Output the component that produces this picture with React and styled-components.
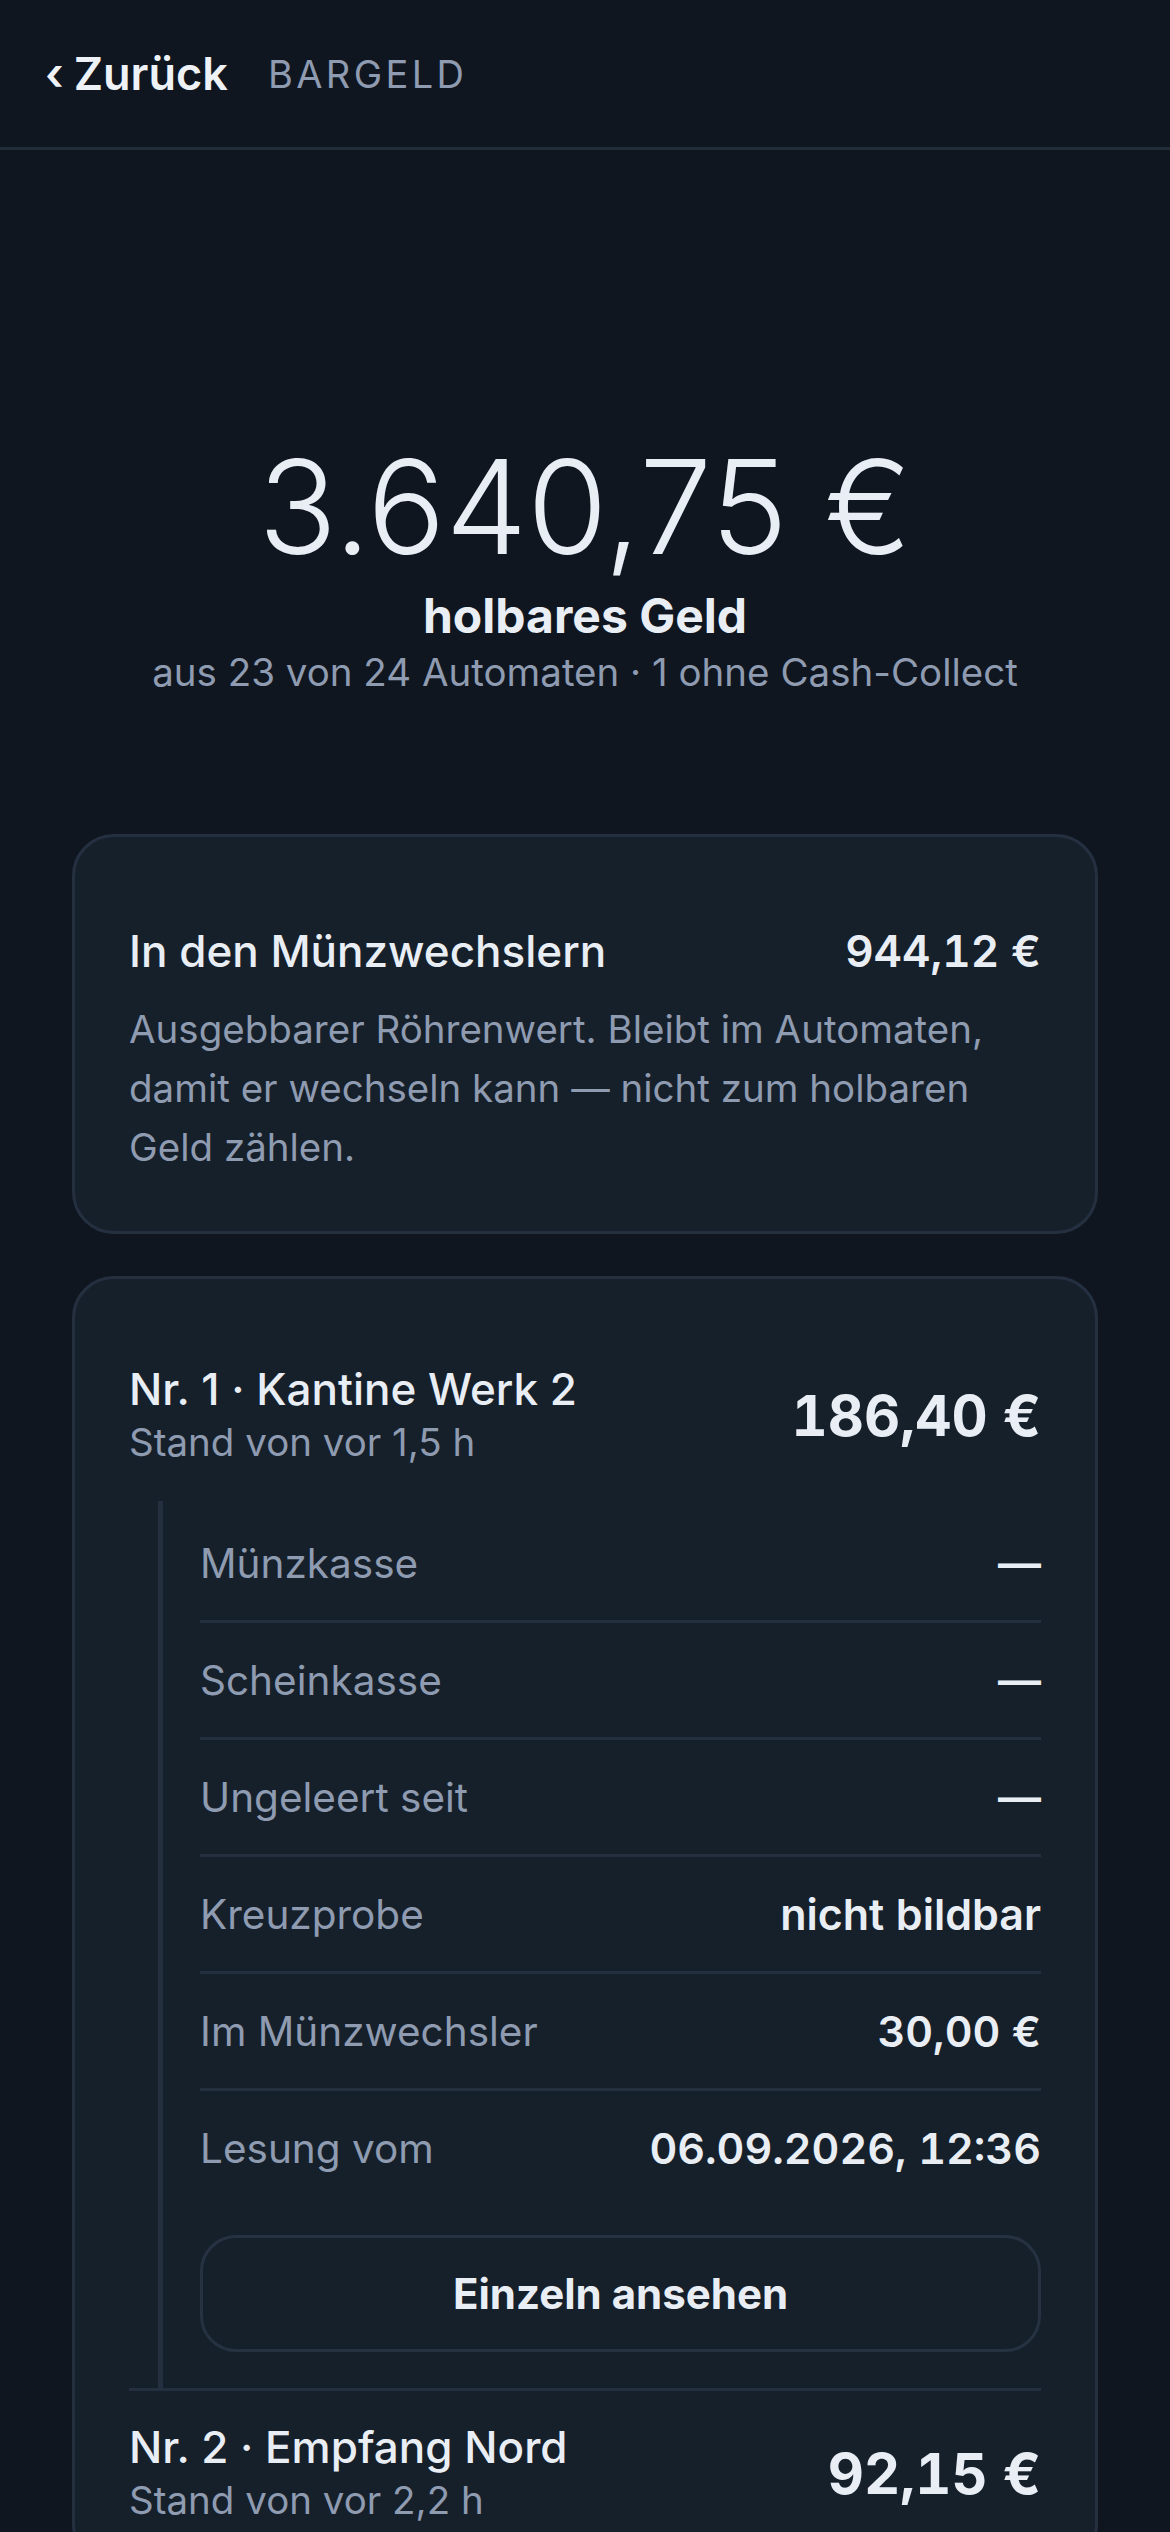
import styled, { createGlobalStyle } from "styled-components";

const GlobalStyle = createGlobalStyle`
  * { box-sizing: border-box; }
  html, body {
    margin: 0;
    padding: 0;
    background: #0f1620;
  }
  body {
    font-family: Inter, "Noto Sans", sans-serif;
    color: #e9eef5;
    -webkit-font-smoothing: antialiased;
  }
`;

const Page = styled.div`
  min-height: 100vh;
  background: #0f1620;
`;

const Header = styled.header`
  height: 150px;
  display: flex;
  align-items: center;
  gap: 40px;
  padding: 0 45px;
  border-bottom: 3px solid #222d3a;
`;

const Back = styled.button`
  display: flex;
  align-items: center;
  gap: 10px;
  padding: 0;
  border: 0;
  background: none;
  color: #eef2f7;
  font-family: Inter, sans-serif;
  font-size: 45px;
  font-weight: 600;
  line-height: 1;
  cursor: pointer;
`;

const SectionName = styled.div`
  font-size: 38px;
  font-weight: 400;
  letter-spacing: 0.09em;
  color: #8e9bb0;
`;

const Hero = styled.section`
  padding: 292px 24px 134px;
  text-align: center;
`;

const Amount = styled.div`
  font-size: 130px;
  font-weight: 300;
  line-height: 1;
  color: #e9eef5;
`;

const AmountLabel = styled.div`
  margin-top: 14px;
  font-size: 48px;
  font-weight: 700;
  line-height: 1.25;
`;

const AmountNote = styled.div`
  font-size: 38.5px;
  line-height: 1.4;
  color: #8e9bb0;
`;

const Cards = styled.div`
  display: flex;
  flex-direction: column;
  gap: 42px;
  padding: 0 72px;
`;

const Card = styled.div`
  background: #16202b;
  border: 3px solid #243040;
  border-radius: 42px;
  padding: ${(p) => (p.info ? "86px 54px 54px" : "54px 54px 0")};
`;

const InfoHead = styled.div`
  display: flex;
  justify-content: space-between;
  align-items: center;
  font-size: 44px;
  font-weight: 500;
  line-height: 1.3;
`;

const Money = styled.span`
  font-weight: 600;
  font-variant-numeric: tabular-nums;
`;

const InfoText = styled.p`
  margin: 20px 0 0;
  font-size: 38.5px;
  line-height: 59px;
  color: #8e9bb0;
`;

const Machine = styled.div`
  padding-top: 30px;
  border-bottom: ${(p) => (p.last ? "0" : "3px solid #243040")};
`;

const MachineHead = styled.div`
  display: flex;
  justify-content: space-between;
  align-items: center;
  padding-bottom: ${(p) => (p.open ? "0" : "36px")};
`;

const MachineTitle = styled.div`
  font-size: 44px;
  font-weight: 500;
  line-height: 53px;
`;

const MachineSub = styled.div`
  font-size: 38.5px;
  line-height: 53px;
  color: #8e9bb0;
`;

const MachineTotal = styled.div`
  font-size: 56px;
  font-weight: 700;
  line-height: 1;
  font-variant-numeric: tabular-nums;
`;

const Details = styled.div`
  margin: 32px 0 0 29px;
  padding: 5px 0 36px 37px;
  border-left: 5px solid #243040;
`;

const Row = styled.div`
  height: 117px;
  display: flex;
  justify-content: space-between;
  align-items: center;
  border-bottom: 3px solid #243040;

  &:last-of-type {
    height: 114px;
    border-bottom: 0;
  }
`;

const RowLabel = styled.span`
  font-size: 40.5px;
  color: #8e9bb0;
`;

const RowValue = styled.span`
  font-size: 43px;
  font-weight: 600;
  color: #e9eef5;
  font-variant-numeric: tabular-nums;
`;

const DetailButton = styled.button`
  width: 100%;
  height: 117px;
  margin-top: 30px;
  border: 3px solid #263242;
  border-radius: 36px;
  background: transparent;
  color: #e9eef5;
  font-family: Inter, sans-serif;
  font-size: 42px;
  font-weight: 700;
  cursor: pointer;
`;

const machines = [
  {
    id: 1,
    name: "Nr. 1 · Kantine Werk 2",
    age: "Stand von vor 1,5 h",
    total: "186,40 €",
    open: true,
    rows: [
      ["Münzkasse", "—"],
      ["Scheinkasse", "—"],
      ["Ungeleert seit", "—"],
      ["Kreuzprobe", "nicht bildbar"],
      ["Im Münzwechsler", "30,00 €"],
      ["Lesung vom", "06.09.2026, 12:36"],
    ],
  },
  {
    id: 2,
    name: "Nr. 2 · Empfang Nord",
    age: "Stand von vor 2,2 h",
    total: "92,15 €",
    open: false,
    rows: [],
  },
];

const App = () => {
  return (
    <Page>
      <GlobalStyle />
      <Header>
        <Back>
          <span>‹</span>
          <span>Zurück</span>
        </Back>
        <SectionName>BARGELD</SectionName>
      </Header>

      <Hero>
        <Amount>3.640,75 €</Amount>
        <AmountLabel>holbares Geld</AmountLabel>
        <AmountNote>aus 23 von 24 Automaten · 1 ohne Cash-Collect</AmountNote>
      </Hero>

      <Cards>
        <Card info>
          <InfoHead>
            <span>In den Münzwechslern</span>
            <Money>944,12 €</Money>
          </InfoHead>
          <InfoText>
            Ausgebbarer Röhrenwert. Bleibt im Automaten, damit er wechseln kann — nicht zum
            holbaren Geld zählen.
          </InfoText>
        </Card>

        <Card>
          {machines.map((m, i) => (
            <Machine key={m.id} last={i === machines.length - 1}>
              <MachineHead open={m.open}>
                <div>
                  <MachineTitle>{m.name}</MachineTitle>
                  <MachineSub>{m.age}</MachineSub>
                </div>
                <MachineTotal>{m.total}</MachineTotal>
              </MachineHead>
              {m.open && (
                <Details>
                  {m.rows.map(([label, value]) => (
                    <Row key={label}>
                      <RowLabel>{label}</RowLabel>
                      <RowValue>{value}</RowValue>
                    </Row>
                  ))}
                  <DetailButton>Einzeln ansehen</DetailButton>
                </Details>
              )}
            </Machine>
          ))}
        </Card>
      </Cards>
    </Page>
  );
};

export default App;
